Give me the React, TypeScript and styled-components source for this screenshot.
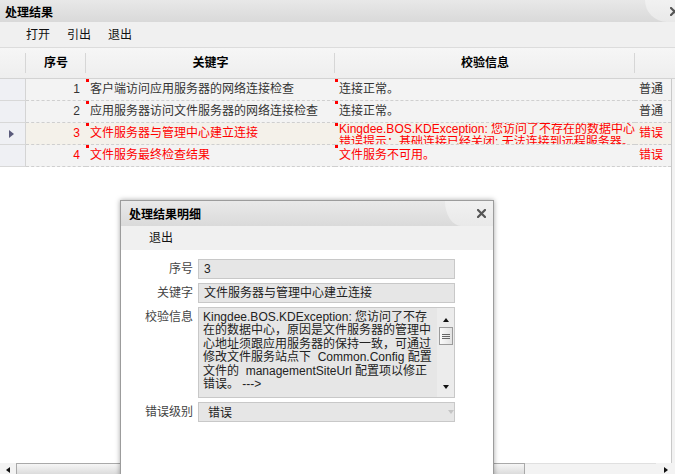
import React from "react";
import styled, { createGlobalStyle } from "styled-components";

const FONT = `"Liberation Sans", "Noto Sans CJK SC", sans-serif`;
const COLS = "26px 60px 249px 300px 1fr";

type Row = {
  no: number;
  key: string;
  info: string;
  level: string;
  error?: boolean;
  selected?: boolean;
};

const rows: Row[] = [
  { no: 1, key: "客户端访问应用服务器的网络连接检查", info: "连接正常。", level: "普通" },
  { no: 2, key: "应用服务器访问文件服务器的网络连接检查", info: "连接正常。", level: "普通" },
  {
    no: 3,
    key: "文件服务器与管理中心建立连接",
    info: "Kingdee.BOS.KDException: 您访问了不存在的数据中心\n错误提示：基础连接已经关闭: 无法连接到远程服务器。",
    level: "错误",
    error: true,
    selected: true,
  },
  { no: 4, key: "文件服务最终检查结果", info: "文件服务不可用。", level: "错误", error: true },
];

const detailLines = [
  "Kingdee.BOS.KDException: 您访问了不存",
  "在的数据中心，原因是文件服务器的管理中",
  "心地址须跟应用服务器的保持一致，可通过",
  "修改文件服务站点下  Common.Config 配置",
  "文件的  managementSiteUrl 配置项以修正",
  "错误。 --->",
];

const GlobalStyle = createGlobalStyle`
  html, body {
    margin: 0;
    padding: 0;
    background: #fff;
  }
  body {
    font-family: ${FONT};
    font-size: 12px;
    color: #333;
  }
  * {
    box-sizing: border-box;
  }
`;

const CloseIcon = () => (
  <svg width="9" height="9" viewBox="0 0 9 9">
    <path d="M1 1 L8 8 M8 1 L1 8" stroke="#555" strokeWidth="2.2" strokeLinecap="square" />
  </svg>
);

const GripIcon = () => (
  <svg width="8" height="7" viewBox="0 0 8 7">
    <path d="M0 1.5 H8 M0 3.5 H8 M0 5.5 H8" stroke="#666" strokeWidth="1" />
  </svg>
);

const App = () => {
  return (
    <>
      <GlobalStyle />
      <Page>
        <TitleBar>
          <Title>处理结果</Title>
          <CornerTab $w={30} $rx={22} $ry={22} $right={-4}>
            <CloseIcon />
          </CornerTab>
        </TitleBar>
        <Toolbar $pad={26} $h={26}>
          <ToolItem>打开</ToolItem>
          <ToolItem>引出</ToolItem>
          <ToolItem>退出</ToolItem>
        </Toolbar>
        <HeaderRow>
          <HeaderCell />
          <HeaderCell $sep>序号</HeaderCell>
          <HeaderCell $sep>关键字</HeaderCell>
          <HeaderCell $sep>校验信息</HeaderCell>
          <HeaderCell $sep />
        </HeaderRow>
        <Body>
          <Rows>
            {rows.map((r) => (
              <DataRow key={r.no} $selected={r.selected}>
                <RowHead>{r.selected && <Pointer />}</RowHead>
                <Cell $error={r.error} $align="right">
                  {r.no}
                </Cell>
                <Cell $error={r.error}>
                  <Marker />
                  {r.key}
                </Cell>
                <Cell $error={r.error} $multi={r.info.includes("\n")}>
                  <Marker />
                  {r.info}
                </Cell>
                <Cell $error={r.error}>{r.level}</Cell>
              </DataRow>
            ))}
          </Rows>
          <SideStrip />
        </Body>
        <HScroll>
          <ArrowBox>
            <Arrow $dir="left" />
          </ArrowBox>
          <Thumb />
          <Track />
          <ArrowBox $w={19}>
            <Arrow $dir="right" />
          </ArrowBox>
        </HScroll>

        <Dialog>
          <DialogTitle>
            <Title $pad={8}>处理结果明细</Title>
            <CornerTab $w={48} $rx={17} $ry={26} $right={7}>
              <CloseIcon />
            </CornerTab>
          </DialogTitle>
          <Toolbar $pad={28} $h={24} $flat>
            <ToolItem>退出</ToolItem>
          </Toolbar>
          <Form>
            <Label>序号</Label>
            <Field>3</Field>
            <Label>关键字</Label>
            <Field>文件服务器与管理中心建立连接</Field>
            <Label>校验信息</Label>
            <Memo>
              <MemoText>
                {detailLines.map((l) => (
                  <div key={l}>{l}</div>
                ))}
              </MemoText>
              <MemoScroll>
                <Arrow $dir="up" />
                <MemoThumb>
                  <GripIcon />
                </MemoThumb>
                <Spacer />
                <Arrow $dir="down" />
              </MemoScroll>
            </Memo>
            <Label>错误级别</Label>
            <Field $pad={9}>
              <ComboText>错误</ComboText>
              <Arrow $dir="down" $light />
            </Field>
          </Form>
        </Dialog>
      </Page>
    </>
  );
};

export default App;

const Page = styled.div`
  position: relative;
  width: 675px;
  height: 474px;
  overflow: hidden;
  display: flex;
  flex-direction: column;
  background: #fff;
`;

const TitleBar = styled.div`
  height: 22px;
  flex-shrink: 0;
  display: flex;
  align-items: center;
  background: linear-gradient(#e8e8e8, #d9d9d9);
`;

const Title = styled.div<{ $pad?: number }>`
  flex: 1;
  padding-left: ${(p) => p.$pad ?? 5}px;
  font-weight: bold;
  color: #000;
  white-space: nowrap;
`;

const CornerTab = styled.div<{ $w: number; $rx: number; $ry: number; $right: number }>`
  align-self: stretch;
  width: ${(p) => p.$w}px;
  background: linear-gradient(#f1f1f1, #e9e9e9);
  border-bottom-left-radius: ${(p) => p.$rx}px ${(p) => p.$ry}px;
  display: flex;
  align-items: center;
  justify-content: flex-end;
  padding-right: ${(p) => Math.max(p.$right, 0)}px;

  svg {
    margin-right: ${(p) => Math.min(p.$right, 0)}px;
    flex-shrink: 0;
  }
`;

const Toolbar = styled.div<{ $pad: number; $h: number; $flat?: boolean }>`
  height: ${(p) => p.$h}px;
  flex-shrink: 0;
  display: flex;
  align-items: center;
  gap: 17px;
  padding-left: ${(p) => p.$pad}px;
  background: #f0f0f0;
  border-bottom: ${(p) => (p.$flat ? "none" : "1px solid #dcdcdc")};
`;

const ToolItem = styled.span`
  color: #111;
  line-height: 16px;
`;

const HeaderRow = styled.div`
  display: grid;
  grid-template-columns: ${COLS};
  height: 31px;
  flex-shrink: 0;
  background: linear-gradient(#f6f6f6, #eeeeee);
  border-bottom: 1px solid #d3d3d3;
`;

const HeaderCell = styled.div<{ $sep?: boolean }>`
  position: relative;
  text-align: center;
  line-height: 30px;
  font-weight: bold;
  color: #000;

  &::before {
    content: "";
    display: ${(p) => (p.$sep ? "block" : "none")};
    position: absolute;
    left: -1px;
    top: 5px;
    bottom: 5px;
    width: 1px;
    background: #d6d6d6;
  }
`;

const Body = styled.div`
  flex: 1;
  display: flex;
  min-height: 0;
`;

const Rows = styled.div`
  flex: 1;
  display: flex;
  flex-direction: column;
`;

const SideStrip = styled.div`
  width: 4px;
  border-left: 1px solid #c9c9c9;
  background: #f2f2f2;
`;

const DataRow = styled.div<{ $selected?: boolean }>`
  display: grid;
  grid-template-columns: ${COLS};
  height: 22px;
  background: ${(p) => (p.$selected ? "#f4f1ea" : "#f3f3f3")};
`;

const RowHead = styled.div`
  display: flex;
  align-items: center;
  justify-content: center;
  background: #eff0f4;
  border-right: 1px solid #d4d4d4;
  border-bottom: 1px solid #d8d8d8;
`;

const Pointer = styled.span`
  width: 0;
  height: 0;
  border-top: 4px solid transparent;
  border-bottom: 4px solid transparent;
  border-left: 5px solid #5b5b7c;
  margin-left: -2px;
`;

const Cell = styled.div<{ $error?: boolean; $align?: "left" | "right"; $multi?: boolean }>`
  position: relative;
  overflow: hidden;
  white-space: ${(p) => (p.$multi ? "pre" : "nowrap")};
  text-align: ${(p) => p.$align ?? "left"};
  padding: ${(p) => (p.$align === "right" ? "0 6px 0 0" : "0 0 0 4px")};
  line-height: ${(p) => (p.$multi ? "13px" : "21px")};
  padding-top: ${(p) => (p.$multi ? "0" : "0")};
  color: ${(p) => (p.$error ? "#ff0000" : "#333")};
  border-bottom: 1px dashed #cfcfcf;
`;

const Marker = styled.span`
  position: absolute;
  top: 0;
  left: 0;
  width: 3px;
  height: 3px;
  background: #ff0000;
`;

const HScroll = styled.div`
  height: 11px;
  flex-shrink: 0;
  display: flex;
  background: #f3f3f3;
`;

const ArrowBox = styled.div<{ $w?: number }>`
  width: ${(p) => p.$w ?? 16}px;
  display: flex;
  align-items: center;
  justify-content: center;
  padding-top: 3px;
`;

const Arrow = styled.span<{ $dir: "left" | "right" | "up" | "down"; $light?: boolean }>`
  width: 0;
  height: 0;
  flex-shrink: 0;
  ${(p) => {
    const c = p.$light ? "#c4c4c4" : "#111";
    switch (p.$dir) {
      case "left":
        return `border-top: 3.5px solid transparent; border-bottom: 3.5px solid transparent; border-right: 4px solid ${c};`;
      case "right":
        return `border-top: 3.5px solid transparent; border-bottom: 3.5px solid transparent; border-left: 4px solid ${c};`;
      case "up":
        return `border-left: 3.5px solid transparent; border-right: 3.5px solid transparent; border-bottom: 4px solid ${c};`;
      default:
        return `border-left: 3.5px solid transparent; border-right: 3.5px solid transparent; border-top: 4px solid ${c};`;
    }
  }}
`;

const Thumb = styled.div`
  width: 509px;
  border: 1px solid #a9a9a9;
  border-bottom: none;
  background: linear-gradient(#f6f6f6, #dcdcdc);
`;

const Track = styled.div`
  flex: 1;
  border-top: 1px solid #e0e0e0;
`;

const Dialog = styled.div`
  position: absolute;
  left: 120px;
  top: 200px;
  width: 374px;
  height: 300px;
  display: flex;
  flex-direction: column;
  background: #fff;
  border: 1px solid #9c9c9c;
  box-shadow: 0 0 5px rgba(0, 0, 0, 0.35);
`;

const DialogTitle = styled.div`
  height: 25px;
  flex-shrink: 0;
  display: flex;
  align-items: center;
  background: linear-gradient(#e9e9e9, #dadada);
`;

const Form = styled.div`
  display: grid;
  grid-template-columns: 72px 257px;
  column-gap: 5px;
  row-gap: 4px;
  padding-top: 9px;
`;

const Label = styled.div`
  text-align: right;
  line-height: 20px;
  color: #444;
  white-space: nowrap;
`;

const Field = styled.div<{ $pad?: number }>`
  height: 20px;
  display: flex;
  align-items: center;
  padding: 0 0 0 ${(p) => p.$pad ?? 5}px;
  border: 1px solid #c8c8c8;
  background: #e6e6e6;
  color: #222;
  line-height: 18px;
  white-space: nowrap;
`;

const ComboText = styled.span`
  flex: 1;
  padding-top: 2px;
`;

const Memo = styled.div`
  height: 91px;
  display: flex;
  border: 1px solid #c8c8c8;
  background: #e6e6e6;
`;

const MemoText = styled.div`
  flex: 1;
  padding: 3px 0 0 4px;
  line-height: 13.4px;
  white-space: pre;
  overflow: hidden;
  color: #222;
`;

const MemoScroll = styled.div`
  width: 17px;
  display: flex;
  flex-direction: column;
  align-items: center;
  padding: 10px 0 8px;
  background: #ececec;
`;

const MemoThumb = styled.div`
  margin-top: 5px;
  width: 14px;
  height: 18px;
  display: flex;
  align-items: center;
  justify-content: center;
  border: 1px solid #9a9a9a;
  background: linear-gradient(90deg, #fafafa, #e2e2e2);
`;

const Spacer = styled.div`
  flex: 1;
`;
